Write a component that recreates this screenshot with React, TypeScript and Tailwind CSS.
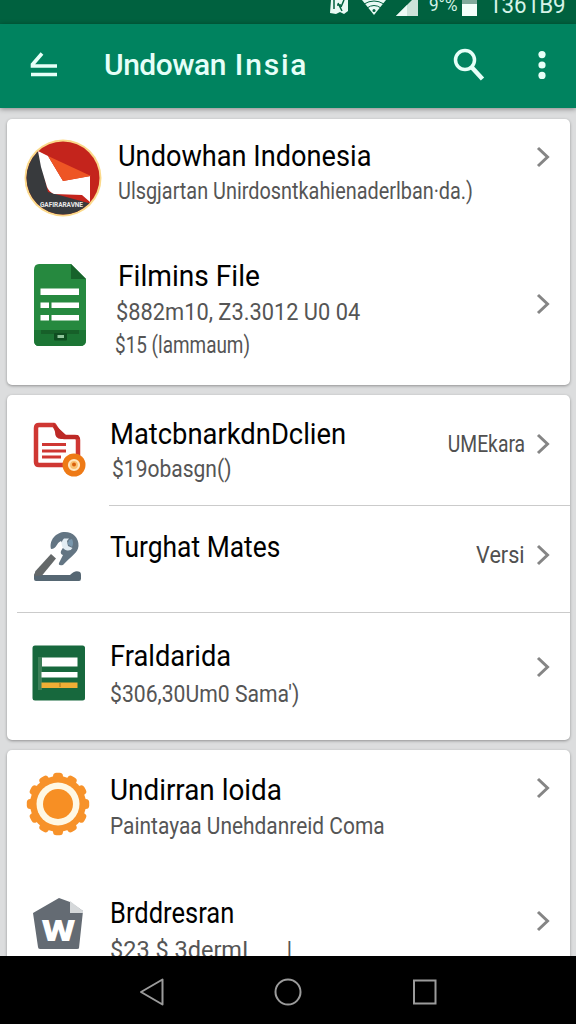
import type { ReactNode } from "react";
import { clsx } from "clsx";

type RowProps = {
  icon: ReactNode;
  title: string;
  titleClass?: string;
  lines?: { text: string; tail?: string; className?: string }[];
  trailing?: string;
  trailingClass?: string;
  className?: string;
  textClass?: string;
  chevronClass?: string;
};

function Chevron() {
  return (
    <svg width="16" height="22" viewBox="0 0 16 22" fill="none" stroke="#858585" strokeWidth="3" className="shrink-0">
      <path d="M3 2 12.500 11 3 20" />
    </svg>
  );
}

function Row({ icon, title, titleClass, lines = [], trailing, trailingClass, className, textClass, chevronClass }: RowProps) {
  return (
    <div className={clsx("flex items-start", className)}>
      {icon}
      <div className={clsx("flex min-w-0 flex-1 flex-col items-start whitespace-nowrap", textClass)}>
        <h2 className={clsx("origin-left text-[29px] leading-9 text-black", titleClass)}>{title}</h2>
        {lines.map((line) => (
          <p key={line.text} className={clsx("origin-left text-[23.5px] leading-[34px] text-[#555]", line.className)}>
            {line.text}
            {line.tail && <span className="ml-[38px]">{line.tail}</span>}
          </p>
        ))}
      </div>
      <div className={clsx("mr-[19px] flex shrink-0 items-center gap-2.5", chevronClass)}>
        {trailing && (
          <span className={clsx("origin-right text-[23px] leading-[22px] text-[#505050]", trailingClass)}>{trailing}</span>
        )}
        <Chevron />
      </div>
    </div>
  );
}

function LogoIcon() {
  return (
    <svg width="78" height="80" viewBox="0 0 78 80" className="ml-[17px] mt-[19px] shrink-0">
      <defs>
        <clipPath id="disc">
          <circle cx="39" cy="40" r="36.5" />
        </clipPath>
      </defs>
      <circle cx="39" cy="40" r="38.5" fill="#fbd98a" />
      <g clipPath="url(#disc)">
        <rect width="78" height="80" fill="#c4241c" />
        <path d="M0 0 14 13 24 54 68 66V80H0Z" fill="#383a3d" />
        <path d="M14 13 24 18 39 43 66 38V64L58 57 30 56Q25 54 23 49L17 29Z" fill="#fff" />
        <path d="M24 18 67 38 39 43Z" fill="#ee5524" />
      </g>
      <text x="16" y="69" fontSize="6.5" fontWeight="700" textLength="43" fill="#e8e8e8">
        GAFIRARAVNE
      </text>
    </svg>
  );
}

function FileIcon() {
  return (
    <svg width="54" height="84" viewBox="0 0 54 84" className="ml-[26px] mt-[23px] shrink-0">
      <path d="M6 1H38L53 16V77Q53 83 47 83H6Q1 83 1 77V7Q1 1 6 1Z" fill="#26893f" />
      <path d="M38 1 53 16H38Z" fill="#17632b" />
      <path d="M1 67H53V77Q53 83 47 83H6Q1 83 1 77Z" fill="#1c7534" />
      <path d="M8 67H46V71H8Z" fill="#176029" />
      <path d="M7.500 25.500H46V32H7.500ZM7.500 39.500H16V45H7.500ZM18.500 39.500H46V45H18.500ZM7.500 52H16V57.500H7.500ZM18.500 52H46V57.500H18.500Z" fill="#fff" />
      <rect x="21" y="70" width="13" height="7.500" rx="1" fill="#0e4d20" />
      <rect x="24.500" y="72" width="6.500" height="3" fill="#8fc49b" />
    </svg>
  );
}

function DocIcon() {
  return (
    <svg width="54" height="56" viewBox="0 0 54 56" className="ml-[26px] mt-[27px] shrink-0">
      <path d="M6 3H21L28 14Q29 15 31 15H42Q45 15 45 18V43H6Q3 43 3 40V6Q3 3 6 3Z" fill="#fff" stroke="#cf3733" strokeWidth="4.500" strokeLinejoin="round" />
      <path d="M20 1 33 13H45L47 17H28Q22 17 22 10Z" fill="#bd2926" />
      <path d="M9 22.500H33M9 29H33M9 35H28" stroke="#cf3733" strokeWidth="3" />
      <circle cx="41" cy="43" r="11.500" fill="#ee7a16" />
      <circle cx="41" cy="43" r="5" fill="#f9c06f" stroke="#ffe6bf" strokeWidth="2.200" />
      <circle cx="41" cy="42.500" r="2" fill="#d95f0c" />
    </svg>
  );
}

function WrenchIcon() {
  return (
    <svg width="50" height="50" viewBox="0 0 50 50" className="ml-[26px] mt-[26px] shrink-0">
      <path d="M18 17C16 8 23 0 32 0C40 0 46 6 45.500 14C45 21 38 24 30 33Q25 34 26 31L30 23Q27 22 28 19L31 14 28 9C23 11 24 17 18 17Z" fill="#637583" />
      <path d="M31 6.500C27 10 28 17 34 18.500Q38 19 39.500 16L35 14 34 9 36 6.500Z" fill="#e3edf3" />
      <path d="M36 8 34.500 12 39 15Q41 11 39 7Z" fill="#7997ad" />
      <path d="M9 43H37Q42 37.500 47 40Q48 41 48 43V46.500Q48 49 46 49H3Q1 49 1 47V43L3 39Z" fill="#566773" />
      <path d="M18 22 23 26.500 9 43.500 1 44 2.500 39Z" fill="#646869" />
    </svg>
  );
}

function SheetIcon() {
  return (
    <svg width="54" height="56" viewBox="0 0 54 56" className="ml-[25px] mt-8 shrink-0">
      <rect x="0.500" y="0.500" width="52.500" height="55" rx="2.500" fill="#17683d" />
      <path d="M6 12H10V45H6Z" fill="#3d8059" />
      <path d="M10 12.500H45.500V21.500H10ZM9.500 27H45.500V32.500H9.500Z" fill="#fff" />
      <path d="M9.500 37.500H45.500V43H9.500Z" fill="#efae35" />
      <path d="M28 38V42" stroke="#a8721a" />
    </svg>
  );
}

function GearIcon() {
  return (
    <svg width="64" height="64" viewBox="-32 -32 64 64" className="ml-[19px] mt-[22px] shrink-0">
      <g fill="#f7922a">
        <circle r="28" />
        {Array.from({ length: 12 }, (_, i) => (
          <rect key={i} x="-5" y="-31.200" width="10" height="12" rx="3.500" transform={`rotate(${i * 30})`} />
        ))}
      </g>
      <circle r="21.500" fill="#fff8e4" />
      <circle r="15" fill="#f78f24" />
    </svg>
  );
}

function WordIcon() {
  return (
    <svg width="52" height="54" viewBox="0 0 52 54" className="ml-[25px] mt-6 shrink-0">
      <path d="M27 1 38 5 51 14 47 51Q47 52 45 52H8Q6 52 6 50L1 16Z" fill="#646b73" />
      <path d="M38 4 51 14V16H38Z" fill="#d5d8da" />
      <text x="26.500" y="44" textAnchor="middle" textLength="34" lengthAdjust="spacingAndGlyphs" fontSize="30" fontWeight="900" fill="#fff">
        W
      </text>
    </svg>
  );
}

function StatusBar() {
  return (
    <div className="relative h-6 overflow-hidden bg-[#00613f] text-[#d5f3e8]">
      <svg width="180" height="24" viewBox="0 0 180 24" className="absolute right-[76px] top-0">
        <path d="M11 0H28V11L24 14 20 12 16 14 10 13Z" fill="#e9faf4" />
        <path d="M14 0V9M18 3 22 11M24 0 21 7M17 5H21" stroke="#00613f" strokeWidth="1.500" />
        <path d="M42 0H66L54 15Z" fill="#e9faf4" />
        <path d="M44 4Q54-2 64 4M47 8Q54 3 61 8" fill="none" stroke="#00613f" />
        <circle cx="54" cy="10.500" r="1.500" fill="#00613f" />
        <path d="M76 16 98-6V16Z" fill="#cde3da" />
        <path d="M87 5V16H76Z" fill="#eefaf6" />
        <path d="M142 0H157V4H142Z" fill="#81aa9c" />
        <path d="M142 4H157V16H142Z" fill="#f4fffb" />
      </svg>
      <span className="absolute left-[429px] top-[-5px] origin-left scale-x-[0.9] text-[19px] leading-5">9°%</span>
      <span className="absolute left-[489px] top-[-7px] origin-left scale-x-[0.93] text-[24px] leading-6">1361B9</span>
    </div>
  );
}

function AppBar() {
  return (
    <header className="relative z-10 flex h-[84px] items-center bg-[#00835f] pb-[3px] text-[#e6fff8] shadow-[0_1px_5px_rgba(0,0,0,0.4)]">
      <svg width="28" height="26" viewBox="0 0 28 26" fill="none" stroke="currentColor" strokeWidth="3.600" className="ml-[30px] shrink-0">
        <path d="M12 1.500 2.500 12.500V14H27M1 22.500H27" />
      </svg>
      <h1 className="ml-[46px] flex-1 whitespace-nowrap text-[30px] font-medium tracking-[-0.5px]">
        Undowan <span className="ml-0.5 tracking-[1.8px]">Insia</span>
      </h1>
      <svg width="32" height="34" viewBox="0 0 32 34" fill="none" stroke="currentColor" className="mr-[53px] shrink-0">
        <circle cx="12" cy="12" r="9.500" strokeWidth="3.500" />
        <path d="M18.500 19 29.500 31" strokeWidth="4.500" />
      </svg>
      <svg width="8" height="28" viewBox="0 0 8 28" fill="currentColor" className="mr-[30px] shrink-0">
        <circle cx="4" cy="3.600" r="3.600" />
        <circle cx="4" cy="14" r="3.600" />
        <circle cx="4" cy="24.400" r="3.600" />
      </svg>
    </header>
  );
}

const card = "w-[563px] shrink-0 rounded-[5px] bg-white shadow-[0_1px_3px_rgba(0,0,0,0.35)]";

export default function App() {
  return (
    <div className="flex h-[1024px] w-[576px] flex-col overflow-hidden bg-[#dcddde] font-['Roboto',sans-serif]">
      <StatusBar />
      <AppBar />

      <main className="flex min-h-0 flex-1 flex-col gap-2.5 overflow-hidden pl-[7px] pt-[11px]">
        <section className={card}>
          <Row
            className="h-[121px]"
            icon={<LogoIcon />}
            textClass="ml-4 pt-[19px]"
            title="Undowhan Indonesia"
            titleClass="scale-x-[0.937]"
            lines={[{ text: "Ulsgjartan Unirdosntkahienaderlban·da.)", className: "scale-x-[0.845]" }]}
            chevronClass="mt-[27px]"
          />
          <Row
            className="h-[145px]"
            icon={<FileIcon />}
            textClass="ml-[29px] pt-[18px]"
            title="Filmins File"
            titleClass="ml-0.5 scale-x-[0.97]"
            lines={[
              { text: "$882m10, Z3.3012 U0 04", className: "mt-px scale-x-[0.928] text-[#444]" },
              { text: "$15 (lammaum)", className: "-ml-px -mt-px scale-x-[0.805]" },
            ]}
            chevronClass="mt-[53px]"
          />
        </section>

        <section className={card}>
          <Row
            className="h-[110px]"
            icon={<DocIcon />}
            textClass="ml-[23px] pt-[21px]"
            title="MatcbnarkdnDclien"
            titleClass="scale-x-[0.944]"
            lines={[{ text: "$19obasgn()", className: "ml-0.5 scale-x-[0.895]" }]}
            trailing="UMEkara"
            trailingClass="relative top-px scale-x-[0.84]"
            chevronClass="mt-[38px]"
          />
          <hr className="ml-[102px] border-[#cbcbcb]" />
          <Row
            className="h-[106px]"
            icon={<WrenchIcon />}
            textClass="ml-[27px] pt-[23px]"
            title="Turghat Mates"
            titleClass="scale-x-[0.91]"
            trailing="Versi"
            trailingClass="relative top-px scale-x-[0.94]"
            chevronClass="mt-[38px]"
          />
          <hr className="ml-2.5 border-[#cbcbcb]" />
          <Row
            className="h-[127px]"
            icon={<SheetIcon />}
            textClass="ml-6 pt-[25px]"
            title="Fraldarida"
            titleClass="scale-x-[0.94]"
            lines={[{ text: "$306,30Um0 Sama')", className: "mt-[3px] scale-x-90" }]}
            chevronClass="mt-[43px]"
          />
        </section>

        <section className={card}>
          <Row
            className="h-[123px]"
            icon={<GearIcon />}
            textClass="ml-5 pt-[22px]"
            title="Undirran loida"
            titleClass="scale-x-[0.96]"
            lines={[{ text: "Paintayaa Unehdanreid Coma", className: "mt-px scale-x-[0.89]" }]}
            chevronClass="mt-[27px]"
          />
          <Row
            className="h-[123px]"
            icon={<WordIcon />}
            textClass="ml-[26px] pt-[22px]"
            title="Brddresran"
            titleClass="scale-x-[0.88]"
            lines={[{ text: "$23 $ 3dermI", tail: "|", className: "mt-0.5" }]}
            chevronClass="mt-[37px]"
          />
        </section>
      </main>

      <nav className="z-10 flex h-[68px] shrink-0 items-center justify-center gap-[109px] bg-black pt-[3px] text-[#9b9b9b]">
        <svg width="28" height="28" viewBox="0 0 28 28" fill="none" stroke="currentColor" strokeWidth="2" strokeLinejoin="round">
          <path d="M4 14 25.500 1.500V26.500Z" />
        </svg>
        <svg width="28" height="28" viewBox="0 0 28 28" fill="none" stroke="currentColor" strokeWidth="2">
          <circle cx="14" cy="14" r="12.500" />
        </svg>
        <svg width="28" height="28" viewBox="0 0 28 28" fill="none" stroke="currentColor" strokeWidth="2">
          <rect x="3" y="2.500" width="21.500" height="23" />
        </svg>
      </nav>
    </div>
  );
}
